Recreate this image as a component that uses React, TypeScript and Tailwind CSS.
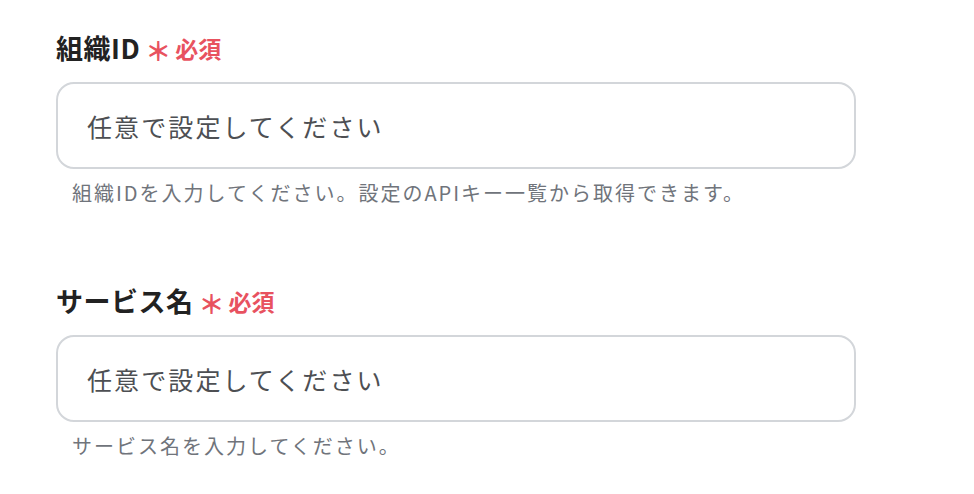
import React from 'react';

type FieldProps = {
  label: string;
  help: string;
};

const Field: React.FC<FieldProps> = ({ label, help }) => {
  return (
    <div className="flex flex-col">
      <div className="flex items-center h-[30px]">
        <span className="text-[27px] font-bold text-[#222222] leading-none tracking-[0.5px]">{label}</span>
        <span className="ml-[5px] text-[26px] font-bold text-[#e8525f] leading-none mt-[6px]">＊</span>
        <span className="ml-[4px] text-[23px] font-bold text-[#e8525f] leading-none mt-[2px]">必須</span>
      </div>
      <input
        type="text"
        placeholder="任意で設定してください"
        className="mt-[20px] w-[800px] h-[87px] rounded-[18px] border-2 border-[#d3d6da] bg-white px-[29px] text-[25px] tracking-[2.1px] text-[#333] placeholder:text-[#4d4f53] outline-none"
      />
      <p className="mt-[12px] pl-[16px] text-[20px] tracking-[2px] text-[#70747b] leading-[24px]">{help}</p>
    </div>
  );
};

const App: React.FC = () => {
  return (
    <div
      className="w-[974px] h-[494px] bg-white pl-[56px] pt-[32px] flex flex-col gap-[80px]"
      style={{ fontFamily: '"Noto Sans CJK JP", "Noto Sans", sans-serif' }}
    >
      <Field label="組織ID" help="組織IDを入力してください。設定のAPIキー一覧から取得できます。" />
      <Field label="サービス名" help="サービス名を入力してください。" />
    </div>
  );
};

export default App;
